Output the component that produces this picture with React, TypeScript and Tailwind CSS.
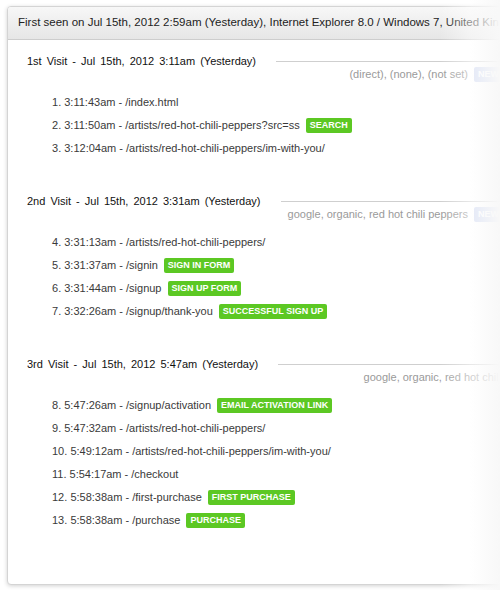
type Hit = { n: number; time: string; path: string; tag?: string };
type Visit = { title: string; source: string; sourceClass: string; hits: Hit[] };

const visits: Visit[] = [
  {
    title: "1st Visit - Jul 15th, 2012 3:11am (Yesterday)",
    source: "(direct), (none), (not set)",
    sourceClass: "pr-[5px]",
    hits: [
      { n: 1, time: "3:11:43am", path: "/index.html" },
      { n: 2, time: "3:11:50am", path: "/artists/red-hot-chili-peppers?src=ss", tag: "Search" },
      { n: 3, time: "3:12:04am", path: "/artists/red-hot-chili-peppers/im-with-you/" },
    ],
  },
  {
    title: "2nd Visit - Jul 15th, 2012 3:31am (Yesterday)",
    source: "google, organic, red hot chili peppers",
    sourceClass: "pr-[5px]",
    hits: [
      { n: 4, time: "3:31:13am", path: "/artists/red-hot-chili-peppers/" },
      { n: 5, time: "3:31:37am", path: "/signin", tag: "Sign in form" },
      { n: 6, time: "3:31:44am", path: "/signup", tag: "Sign up form" },
      { n: 7, time: "3:32:26am", path: "/signup/thank-you", tag: "Successful sign up" },
    ],
  },
  {
    title: "3rd Visit - Jul 15th, 2012 5:47am (Yesterday)",
    source: "google, organic, red hot chili peppers",
    sourceClass: "-mr-[71px]",
    hits: [
      { n: 8, time: "5:47:26am", path: "/signup/activation", tag: "Email activation link" },
      { n: 9, time: "5:47:32am", path: "/artists/red-hot-chili-peppers/" },
      { n: 10, time: "5:49:12am", path: "/artists/red-hot-chili-peppers/im-with-you/" },
      { n: 11, time: "5:54:17am", path: "/checkout" },
      { n: 12, time: "5:58:38am", path: "/first-purchase", tag: "First purchase" },
      { n: 13, time: "5:58:38am", path: "/purchase", tag: "Purchase" },
    ],
  },
];

function Tag({ label }: { label: string }) {
  return (
    <span className="ml-[6px] inline-flex h-[15px] items-center rounded-[2px] bg-[#5cc823] px-[4px] text-[9px] font-bold uppercase leading-none text-white">
      {label}
    </span>
  );
}

function VisitBlock({ visit }: { visit: Visit }) {
  return (
    <div className="mb-[35px]">
      <div className="flex h-[13px] items-center">
        <h2 className="whitespace-nowrap text-[11px] leading-[13px] [word-spacing:2px] text-[#111]">
          {visit.title}
        </h2>
        <div className="ml-[20px] h-px flex-1 bg-[#cfcfcf]" />
      </div>
      <div className={`flex h-[13px] items-center justify-end text-[11px] text-[#9a9a9a] ${visit.sourceClass}`}>
        <span className="whitespace-nowrap">{visit.source}</span>
        <span className="ml-[6px] inline-flex h-[15px] items-center rounded-[2px] bg-[#c9d3ef] px-[4px] text-[9px] font-bold text-white">
          NEW
        </span>
      </div>
      <ul className="mt-[10px] pl-[25px] text-[11px] text-[#3a3a3a]">
        {visit.hits.map((h) => (
          <li key={h.n} className="flex h-[23px] items-center whitespace-nowrap">
            {h.n}. {h.time} - {h.path}
            {h.tag && <Tag label={h.tag} />}
          </li>
        ))}
      </ul>
    </div>
  );
}

export default function App() {
  return (
    <div className="relative h-[590px] w-[500px] overflow-hidden bg-white font-['Liberation_Sans',Arial,sans-serif]">
      <div className="ml-[7px] mt-[6px] h-[579px] w-[580px] overflow-hidden rounded-[4px] border border-[#d4d4d4] bg-white shadow-[0_1px_4px_rgba(0,0,0,0.18)]">
        <div className="flex h-[33px] items-center whitespace-nowrap border-b border-[#cdcdcd] bg-gradient-to-b from-[#f7f7f7] to-[#e6e6e6] pl-[10px] text-[11.5px] text-[#222]">
          First seen on Jul 15th, 2012 2:59am (Yesterday), Internet Explorer 8.0 / Windows 7, United Kingdom
        </div>
        <div className="w-[500px] pl-[19px] pt-[15px]">
          {visits.map((v) => (
            <VisitBlock key={v.title} visit={v} />
          ))}
        </div>
      </div>
      <div className="pointer-events-none absolute right-0 top-0 h-full w-[60px] bg-gradient-to-r from-white/0 via-white/50 to-[#f8f8f8]" />
    </div>
  );
}
